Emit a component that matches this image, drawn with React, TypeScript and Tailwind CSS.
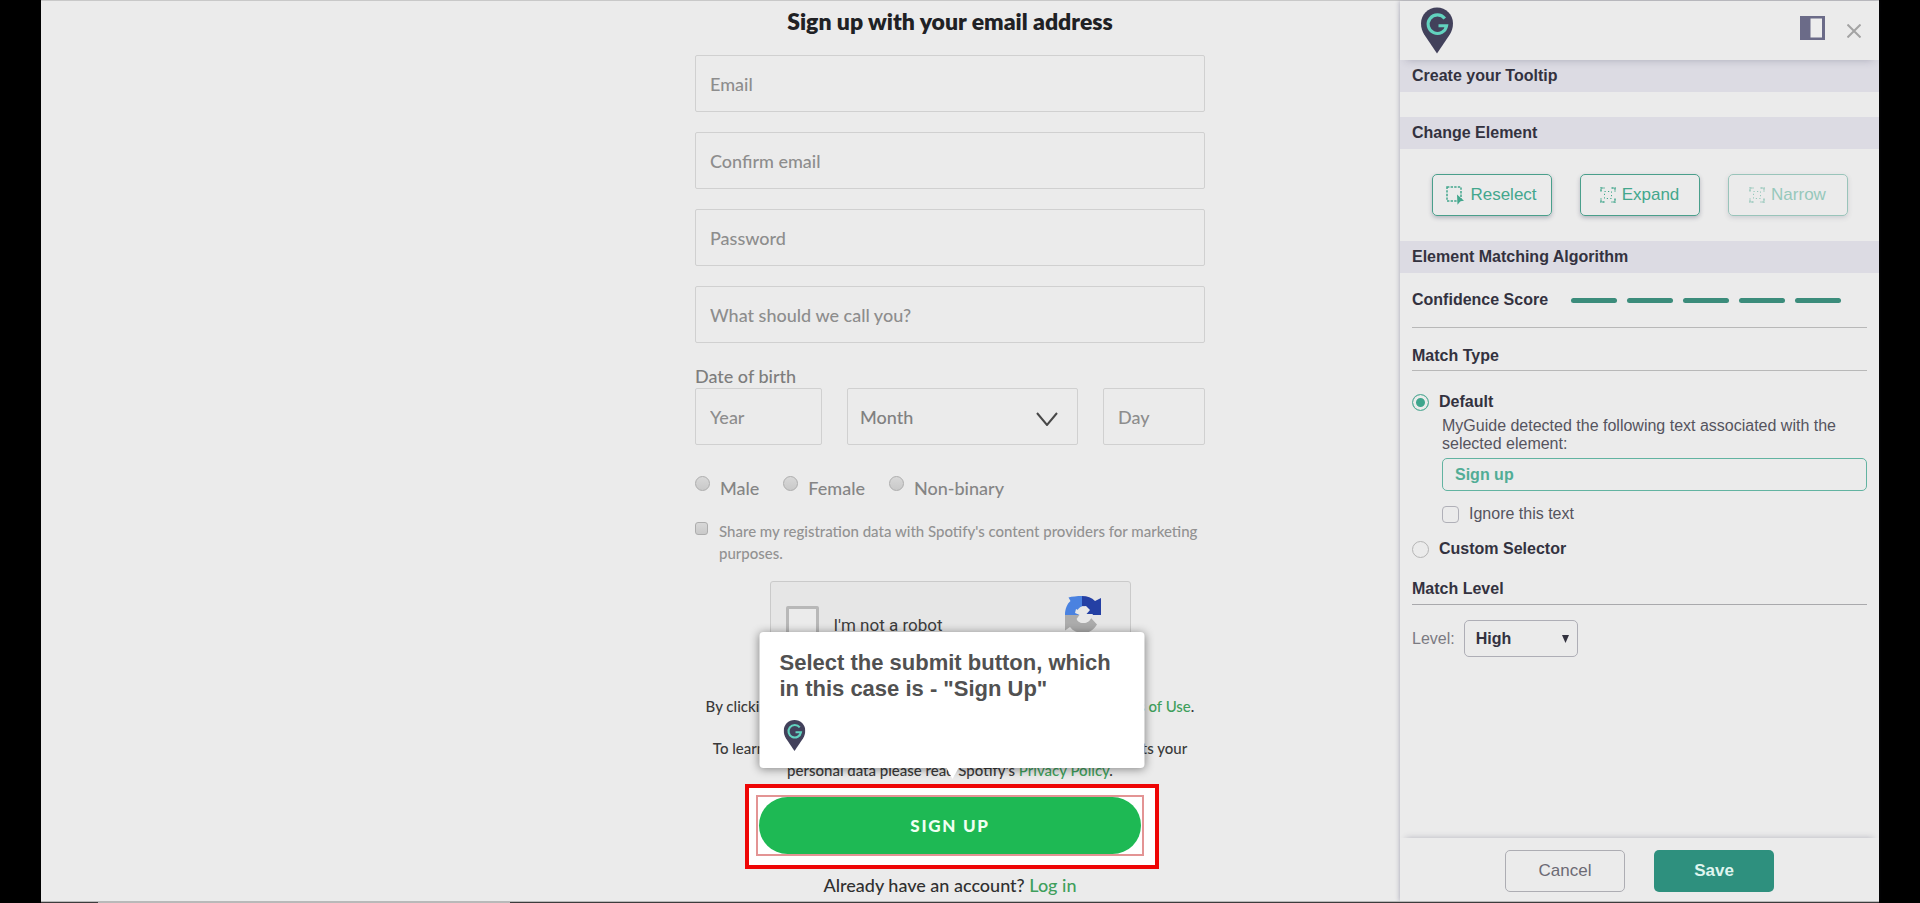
import React from "react";

const spotify = "font-['Lato','Liberation_Sans',sans-serif] font-medium";
const fieldBase =
  "h-[57px] w-full rounded-[2px] border border-[#d0d0d0] bg-transparent text-lg text-[#808080] placeholder:text-[#8d8d8d] placeholder:opacity-100 outline-none";
const field = `${fieldBase} px-3.5`;
const oldRadio =
  "size-[15px] shrink-0 appearance-none rounded-full border border-[#adadad] bg-linear-to-b from-[#d8d8d8] to-[#c9c9c9]";
const sectionBar = "flex h-8 items-center bg-[#dcdbe3] px-3 text-base font-bold text-[#33323f]";
const toolButton =
  "flex h-[42px] w-[120px] items-center justify-center gap-1.5 rounded-[5px] border border-[#4a9f8b] text-[17px] text-[#43a78d] shadow-[0_2px_4px_rgba(60,60,90,0.3)]";

function Pin({ className }: { className: string }) {
  return (
    <svg viewBox="0 0 32 46" className={className} aria-hidden="true">
      <path d="M16 0C7 0 0 7 0 16c0 4 1.200 7.600 3.200 11L16 46l12.800-19C30.800 23.600 32 20 32 16 32 7 25 0 16 0z" fill="#42415b" />
      <path d="M23.800 11A9.300 9.300 0 1 0 25.600 18.200H17.500" fill="none" stroke="#62d2bf" strokeWidth="3.100" />
    </svg>
  );
}

function SelectIcon() {
  return (
    <svg viewBox="0 0 18 19" className="h-[19px] w-[18px]" fill="none" aria-hidden="true">
      <path d="M1 1h14v14H1z" stroke="currentColor" strokeWidth="1.500" strokeDasharray="2.400 1.200" />
      <path d="M11 8.500l7 6.200-3.600.5-2.900 3.600z" fill="currentColor" />
    </svg>
  );
}

function CornersIcon() {
  return (
    <svg viewBox="0 0 16 16" className="size-4" fill="none" stroke="currentColor" aria-hidden="true">
      <path d="M1 4.500V1h3.500M11.500 1H15v3.500M15 11.500V15h-3.500M4.500 15H1v-3.500" strokeWidth="1.500" strokeDasharray="2.200 .8" />
      <path d="M4.500 4.500h7v7h-7z" strokeWidth="1" strokeDasharray="1.200 2.300" />
    </svg>
  );
}

function CaptchaLogo() {
  return (
    <svg viewBox="0 0 36 38" className="h-[38px] w-9" aria-hidden="true">
      <path d="M17 0v10.500c-2.500.5-5 3.500-5.500 6.500L15 19H0C0 13 2 8 5.500 5L3.500 1.500C7 .5 12 0 17 0z" fill="#4a82e0" />
      <path d="M17 0c5.500 0 9.800 1.800 13 5l6-3v17H19l5-4.500c-1.500-2.500-4-4.300-7-4.300z" fill="#2440a4" />
      <path d="M0 19h14.500l-3 4c1.500 2.800 4 4 7 4 4 0 6.500-2.500 7.500-5l6 6.500C29 33.500 24 37 18 37c-5.500 0-10-2-13-6l-5 3.500z" fill="#acacac" />
      <path d="M17 10.500l4-.5 4 4-3.500 4H28l-2.500 5c-1.500 2.500-4 4-7.500 4-3 0-5-1.500-6-3.500l3-4.500-5-2 1-4 4 2z" fill="#e8e8e8" />
    </svg>
  );
}

function SignupForm() {
  return (
    <form className={`${spotify} flex flex-col pt-1.5`} onSubmit={(e) => e.preventDefault()}>
      <h1 className="mb-5 text-center text-[23px] leading-7 font-extrabold text-[#202124]">Sign up with your email address</h1>
      <div className="flex flex-col gap-5">
        <input className={field} aria-label="Email" placeholder="Email" type="email" />
        <input className={field} aria-label="Confirm email" placeholder="Confirm email" type="email" />
        <input className={field} aria-label="Password" placeholder="Password" type="password" />
        <input className={field} aria-label="Name" placeholder="What should we call you?" />
      </div>
      <fieldset className="mt-[21px]">
        <legend className="text-lg leading-6 text-[#7d7d7d]">Date of birth</legend>
        <div className="grid grid-cols-[127px_1fr_102px] gap-[25px]">
          <input className={field} aria-label="Year" placeholder="Year" />
          <div className="relative">
            <select className={`${fieldBase} appearance-none px-3`} aria-label="Month">
              <option>Month</option>
            </select>
            <svg viewBox="0 0 22 14" className="pointer-events-none absolute top-6 right-5 h-3.5 w-5.5" fill="none" stroke="#484848" strokeWidth="2" aria-hidden="true">
              <path d="M1 1l10 12L21 1" />
            </svg>
          </div>
          <input className={field} aria-label="Day" placeholder="Day" />
        </div>
      </fieldset>
      <div className="mt-[31px] flex gap-6 text-lg leading-6 text-[#858585]">
        {["Male", "Female", "Non-binary"].map((g) => (
          <label key={g} className="flex items-start gap-2.5">
            <input type="radio" name="gender" className={oldRadio} />
            {g}
          </label>
        ))}
      </div>
      <label className="mt-5 flex items-start gap-[11px] text-[15px] leading-[22px] text-[#929292]">
        <input type="checkbox" className="mt-0.5 size-[13px] shrink-0 appearance-none rounded-[3px] border border-[#adadad] bg-linear-to-b from-[#d8d8d8] to-[#c9c9c9]" />
        <span>Share my registration data with Spotify's content providers for marketing purposes.</span>
      </label>
      <div className="mt-[17px] flex h-[94px] w-[361px] items-start justify-between self-center rounded-[3px] border border-[#cacaca] bg-[#e6e6e6] px-[15px] font-['Roboto',sans-serif] text-[17px] font-normal text-[#3c3c3c]">
        <label className="flex items-center gap-[15px] pt-6">
          <input type="checkbox" className="size-[33px] appearance-none rounded-[2px] border-[3px] border-[#b8b8b8] bg-[#ebebeb]" />
          <span className="pt-1.5">I'm not a robot</span>
        </label>
        <div className="pt-3.5 pr-3.5">
          <CaptchaLogo />
        </div>
      </div>
      <p className="mt-5 text-center text-[15px] leading-[22px] text-[#3a3a3a]">
        By clicking on Sign up, you agree to Spotify's{" "}
        <a href="#terms" className="text-[#3f9f5c]">Terms and Conditions of Use</a>.
      </p>
      <p className="mt-5 px-4 text-center text-[15px] leading-[22px] text-[#3a3a3a]">
        To learn more about how Spotify collects, uses, shares and protects your personal data please read Spotify's{" "}
        <a href="#privacy" className="text-[#3f9f5c]">Privacy Policy</a>.
      </p>
      <div className="flex justify-center pt-[3px] pl-1">
        <div className="relative border-4 border-[#ee0505] bg-white pt-[7px] pr-[11px] pb-[9px] pl-[7px]">
          <Tooltip />
          <div className="border-2 border-[#e39494] px-px">
            <button className="h-[57px] w-[382px] rounded-full bg-[#1eb954] text-[17px] font-black tracking-widest text-[#effff2]">SIGN UP</button>
          </div>
        </div>
      </div>
      <p className="mt-1 text-center text-lg leading-6 text-[#303030]">
        Already have an account?{" "}
        <a href="#login" className="text-[#3f9f5c]">Log in</a>
      </p>
    </form>
  );
}

function Tooltip() {
  return (
    <div role="tooltip" className="absolute bottom-[calc(100%+20px)] left-1/2 h-[136px] w-[385px] -translate-x-1/2 rounded-[4px] bg-white px-5 pt-4.5 font-['Liberation_Sans',Arial,sans-serif] shadow-[0_1px_10px_rgba(0,0,0,0.45)]">
      <p className="text-[22px] leading-[26px] font-bold text-[#515151]">Select the submit button, which in this case is - "Sign Up"</p>
      <Pin className="mt-[18px] ml-1 h-[31px] w-[22px]" />
      <svg viewBox="0 0 12 11" className="absolute top-full left-1/2 h-[11px] w-3 -translate-x-1/2" aria-hidden="true">
        <path d="M0 0h12L6 11z" fill="#fff" />
      </svg>
    </div>
  );
}

function EditorPanel() {
  return (
    <aside className="flex flex-col font-['Liberation_Sans',Arial,sans-serif] text-[#33323f] shadow-[-1px_0_4px_rgba(70,70,110,0.3)]">
      <header className="z-10 flex h-[59px] items-start justify-between pt-1.5 pr-4.5 pl-[21px] shadow-[0_6px_8px_-6px_rgba(60,60,90,0.3)]">
        <Pin className="h-[47px] w-8" />
        <div className="flex items-center gap-[22px] pt-[9px]">
          <button aria-label="Dock panel">
            <svg viewBox="0 0 25 24" className="h-6 w-[25px]" aria-hidden="true">
              <path d="M0 0h25v24H0z" fill="#6b6b88" />
              <path d="M10.500 2.500h11.500v19H10.500z" fill="#ededed" />
            </svg>
          </button>
          <button aria-label="Close" className="pt-1.5">
            <svg viewBox="0 0 14 14" className="size-3.5" stroke="#a3a3a3" strokeWidth="2" aria-hidden="true">
              <path d="M.5.5l13 13M13.500.5l-13 13" />
            </svg>
          </button>
        </div>
      </header>
      <h2 className={sectionBar}>Create your Tooltip</h2>
      <h2 className={`${sectionBar} mt-[25px]`}>Change Element</h2>
      <div className="flex justify-center gap-7 px-3 py-[25px]">
        <button className={toolButton}><SelectIcon />Reselect</button>
        <button className={toolButton}><CornersIcon />Expand</button>
        <button className={`${toolButton} opacity-50`} disabled><CornersIcon />Narrow</button>
      </div>
      <h2 className={sectionBar}>Element Matching Algorithm</h2>
      <div className="flex grow flex-col px-3">
        <div className="flex h-[55px] items-center justify-between border-b border-[#b8b8b8] pr-[26px]">
          <h3 className="text-base font-bold">Confidence Score</h3>
          <div className="flex gap-2.5">
            {[1, 2, 3, 4, 5].map((n) => (
              <span key={n} className="h-[5px] w-[46px] rounded-full bg-[#3b8c7b]" />
            ))}
          </div>
        </div>
        <h3 className="flex h-[43px] items-end border-b border-[#b8b8b8] pb-1 text-base leading-5 font-bold">Match Type</h3>
        <label className="mt-[22px] flex h-[18px] items-center gap-2.5 text-base font-bold">
          <input type="radio" name="match" defaultChecked className="size-[17px] appearance-none rounded-full border border-[#5fae9c] bg-[#3fa58d] shadow-[inset_0_0_0_3px_#ebebeb]" />
          Default
        </label>
        <div className="flex flex-col pt-1.5 pl-[30px]">
          <p className="text-base leading-[18px] text-[#55545e]">MyGuide detected the following text associated with the selected element:</p>
          <input aria-label="Detected text" defaultValue="Sign up" className="mt-[5px] h-[33px] w-full rounded-[5px] border border-[#62b3a1] bg-transparent px-3 text-base font-bold text-[#51ad96] outline-none" />
          <label className="mt-3.5 flex h-[18px] items-center gap-2.5 text-base text-[#55545e]">
            <input type="checkbox" className="size-[17px] appearance-none rounded-[4px] border border-[#b0b0b8]" />
            Ignore this text
          </label>
        </div>
        <label className="mt-[17px] flex h-[18px] items-center gap-2.5 text-base font-bold">
          <input type="radio" name="match" className="size-[17px] appearance-none rounded-full border border-[#b5b5b5]" />
          Custom Selector
        </label>
        <h3 className="flex h-[47px] items-end border-b border-[#a9a9ac] pb-[5px] text-base leading-5 font-bold">Match Level</h3>
        <div className="mt-[15px] flex items-center gap-[9px] text-base text-[#7b7a82]">
          <label htmlFor="level">Level:</label>
          <div className="relative">
            <select id="level" className="h-[37px] w-[114px] appearance-none rounded-[5px] border border-[#aeaeb6] bg-transparent px-[11px] font-bold text-[#33323f]">
              <option>High</option>
            </select>
            <svg viewBox="0 0 7 8" className="pointer-events-none absolute top-[15px] right-[9px] h-2 w-[7px]" aria-hidden="true">
              <path d="M0 0h7L3.500 8z" fill="#33323f" />
            </svg>
          </div>
        </div>
      </div>
      <footer className="flex justify-center gap-[29px] pt-3 pb-[9px] shadow-[0_-6px_6px_-6px_rgba(60,60,90,0.3)]">
        <button className="h-[42px] w-[120px] rounded-[5px] border border-[#adadb3] text-[17px] text-[#6b6a74]">Cancel</button>
        <button className="h-[42px] w-[120px] rounded-[5px] bg-[#2e907e] text-[17px] font-bold text-[#dff5ef]">Save</button>
      </footer>
    </aside>
  );
}

export default function App() {
  return (
    <div className="flex min-h-screen flex-col bg-black px-[41px]">
      <main className="grid grow grid-cols-[1fr_510px_195px_479px] border-t border-[#c8c8c8] bg-[#ebebeb]">
        <div />
        <SignupForm />
        <div />
        <EditorPanel />
      </main>
      <div className="flex h-0.5 border-t border-[#b9b9b9]">
        <span className="w-[57px] bg-[#3c3c3c]" />
        <span className="w-[412px] bg-[#b9b9b9]" />
        <span className="grow bg-[#3c3c3c]" />
      </div>
    </div>
  );
}
